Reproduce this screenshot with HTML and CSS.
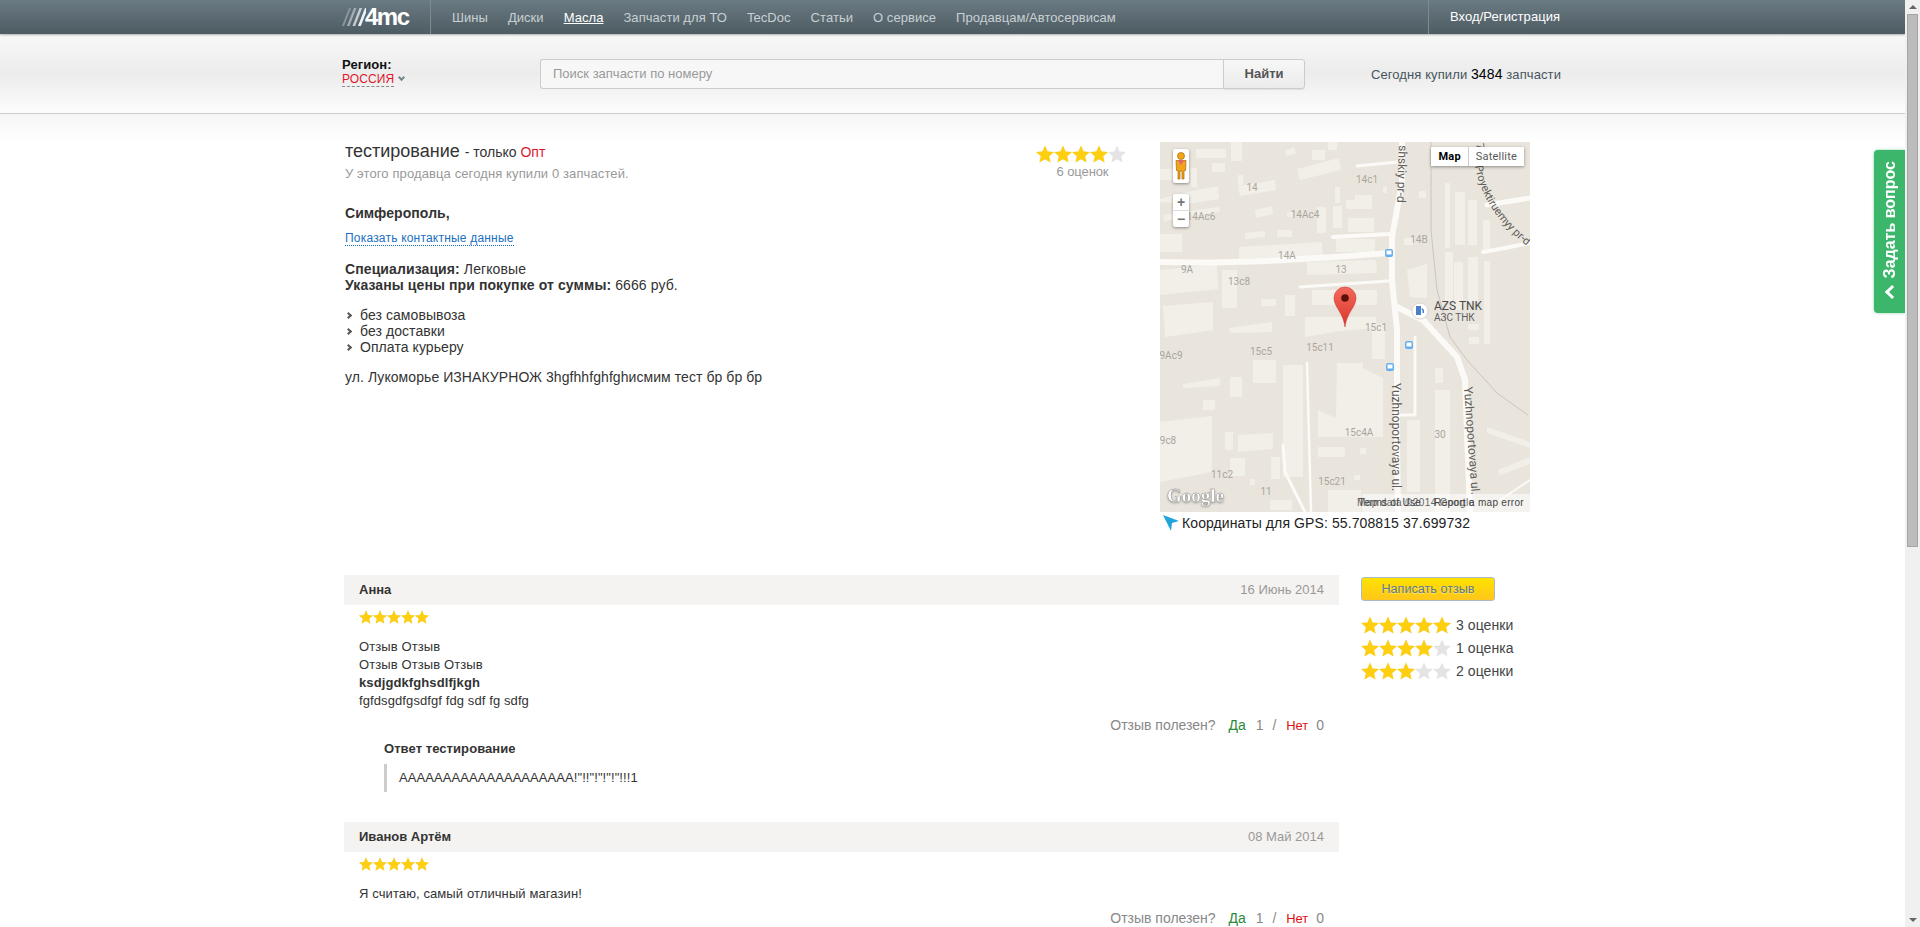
FILE: index.html
```html
<!DOCTYPE html>
<html lang="ru">
<head>
    <meta charset="UTF-8">
    <title>тестирование - 4mc</title>
    <link rel="stylesheet" href="styles.css">
</head>
<body>
    <div class="page">
        <!-- Top navigation -->
        <div class="topbar">
            <div class="wrap topbar-inner">
                <a class="logo" href="#">
                    <svg class="logo-slashes" width="24" height="18" viewBox="0 0 24 18">
                        <path d="M0 18 7 0h2L2 18z" fill="#8b979c"/>
                        <path d="M5 18 12 0h2.4L7.4 18z" fill="#a5afb3"/>
                        <path d="M10.5 18 17.5 0h2.6l-7 18z" fill="#c6cdd0"/>
                        <path d="M16 18 23 0h2.8l-7 18z" fill="#f0f2f3"/>
                    </svg>
                    <span class="logo-text">4mc</span>
                </a>
                <nav class="nav">
                    <a href="#">Шины</a>
                    <a href="#">Диски</a>
                    <a href="#" class="active">Масла</a>
                    <a href="#">Запчасти для ТО</a>
                    <a href="#">TecDoc</a>
                    <a href="#">Статьи</a>
                    <a href="#">О сервисе</a>
                    <a href="#">Продавцам/Автосервисам</a>
                </nav>
                <a class="login" href="#">Вход/Регистрация</a>
            </div>
        </div>

        <!-- Region and search -->
        <div class="searchbar">
            <div class="wrap searchbar-inner">
                <div class="region">
                    <b>Регион:</b>
                    <div><span class="region-name">РОССИЯ</span><span class="region-arrow"></span></div>
                </div>
                <form class="search">
                    <input type="text" placeholder="Поиск запчасти по номеру" aria-label="Поиск">
                    <button type="button">Найти</button>
                </form>
                <div class="counter">Сегодня купили <span>3484</span> запчасти</div>
            </div>
        </div>

        <div class="main">
            <div class="wrap content">
                <!-- Seller -->
                <div class="seller">
                    <div class="seller-info">
                        <h1>тестирование <small>- только <em>Опт</em></small></h1>
                        <p class="sold-today">У этого продавца сегодня купили 0 запчастей.</p>
                        <p class="city">Симферополь,</p>
                        <p class="contacts"><a href="#">Показать контактные данные</a></p>
                        <p class="specs"><b>Специализация:</b> Легковые<br><b>Указаны цены при покупке от суммы:</b> 6666 руб.</p>
                        <ul class="terms">
                            <li>без самовывоза</li>
                            <li>без доставки</li>
                            <li>Оплата курьеру</li>
                        </ul>
                        <p class="address">ул. Лукоморье ИЗНАКУРНОЖ 3hgfhhfghfghисмим тест бр бр бр</p>
                    </div>
                    <div class="seller-rating">
                        <div class="stars"><i style="width: 80%"></i></div>
                        <div class="votes">6 оценок</div>
                    </div>
                    <div class="map-col">
                        <div class="map">
                            <svg class="map-canvas" width="370" height="370" viewBox="0 0 370 370">
                                <defs>
                                    <linearGradient id="pin" x1="0" y1="0" x2="0" y2="1">
                                        <stop offset="0" stop-color="#f4695c"/>
                                        <stop offset="1" stop-color="#d9352a"/>
                                    </linearGradient>
                                    <path id="proyekt" d="M315 24C320 50 333 78 372 108"/>
                                </defs>
                                <rect width="370" height="370" fill="#e9e5dd"/>

                                <!-- buildings -->
                                <g fill="#f2efe9">
                                    <rect x="36" y="7" width="30" height="9"/>
                                    <rect x="71" y="0" width="11" height="19"/>
                                    <rect x="52" y="21" width="13" height="9"/>
                                    <rect x="31" y="26" width="6" height="19"/>
                                    <rect x="0" y="27" width="27" height="11"/>
                                    <rect x="152" y="8" width="13" height="10"/>
                                    <rect x="168" y="0" width="9" height="8"/>
                                    <polygon points="125,9 134,5 136,11 127,14"/>
                                    <polygon points="137,27 179,16 181,28 140,38"/>
                                    <rect x="78" y="33" width="5" height="10"/>
                                    <polygon points="78,44 115,38 116,48 80,54"/>
                                    <polygon points="27,50 58,44 59,57 27,62 0,60 0,57"/>
                                    <polygon points="95,68 112,64 113,72 96,76"/>
                                    <polygon points="3,73 59,65 60,70 4,79"/>
                                    <rect x="127" y="70" width="6" height="5"/>
                                    <rect x="157" y="65" width="9" height="26"/>
                                    <rect x="173" y="64" width="9" height="22"/>
                                    <polygon points="186,58 195,58 195,53 212,53 212,67 186,67"/>
                                    <rect x="188" y="76" width="26" height="14"/>
                                    <rect x="175" y="45" width="5" height="16"/>
                                    <rect x="223" y="45" width="4" height="6"/>
                                    <rect x="259" y="49" width="7" height="7"/>
                                    <polygon points="85,91 105,89 105,95 85,97"/>
                                    <rect x="117" y="88" width="15" height="7"/>
                                    <rect x="0" y="92" width="22" height="18"/>
                                    <polygon points="79,105 162,100 163,116 79,117"/>
                                    <rect x="176" y="97" width="39" height="13"/>
                                    <rect x="244" y="96" width="9" height="7"/>
                                    <polygon points="147,120 216,118 217,131 147,133"/>
                                    <polygon points="247,128 267,122 267,156 250,155"/>
                                    <polygon points="0,128 57,122 58,147 0,153"/>
                                    <rect x="62" y="128" width="15" height="38"/>
                                    <rect x="152" y="148" width="65" height="15"/>
                                    <rect x="101" y="157" width="15" height="7"/>
                                    <rect x="125" y="153" width="10" height="21"/>
                                    <polygon points="3,164 53,160 53,188 5,195"/>
                                    <polygon points="145,175 216,175 216,186 180,189 145,195"/>
                                    <rect x="212" y="182" width="13" height="35"/>
                                    <polygon points="69,186 112,180 112,190 70,191"/>
                                    <rect x="93" y="218" width="23" height="23"/>
                                    <polygon points="23,242 60,236 60,244 23,246"/>
                                    <rect x="70" y="235" width="12" height="20"/>
                                    <rect x="43" y="258" width="12" height="10"/>
                                    <polygon points="0,280 52,274 52,330 0,340"/>
                                    <rect x="65" y="290" width="8" height="18"/>
                                    <polygon points="78,293 113,291 113,307 78,310"/>
                                    <rect x="70" y="316" width="15" height="18"/>
                                    <rect x="123" y="223" width="20" height="112"/>
                                    <polygon points="177,221 203,221 203,226 223,236 223,295 158,295 158,268 176,276"/>
                                    <rect x="158" y="305" width="27" height="10"/>
                                    <rect x="200" y="306" width="6" height="6"/>
                                    <rect x="111" y="315" width="9" height="22"/>
                                    <rect x="90" y="337" width="5" height="6"/>
                                    <rect x="110" y="358" width="22" height="10"/>
                                    <rect x="194" y="333" width="6" height="5"/>
                                    <rect x="168" y="348" width="33" height="22"/>
                                    <rect x="247" y="278" width="13" height="72"/>
                                    <rect x="275" y="226" width="8" height="15"/>
                                    <rect x="275" y="248" width="15" height="122"/>
                                    <rect x="285" y="41" width="5" height="65"/>
                                    <rect x="295" y="50" width="10" height="53"/>
                                    <rect x="308" y="58" width="9" height="45"/>
                                    <rect x="323" y="78" width="7" height="32"/>
                                    <rect x="285" y="110" width="8" height="49"/>
                                    <rect x="294" y="120" width="9" height="48"/>
                                    <rect x="308" y="115" width="10" height="45"/>
                                    <rect x="324" y="119" width="6" height="83"/>
                                    <rect x="308" y="182" width="11" height="6"/>
                                    <rect x="309" y="195" width="10" height="7"/>
                                    <polygon points="327,285 370,300 370,306 327,291"/>
                                    <polygon points="338,328 370,315 370,322 340,333"/>
                                </g>

                                <!-- rail line -->
                                <path d="M271 0V88L277 148 290 195 307 218 337 251 368 273" fill="none" stroke="#c8c5bf"/>

                                <!-- roads -->
                                <g fill="none" stroke="#fbfaf7" stroke-linecap="round" stroke-linejoin="round">
                                    <path d="M0 120C80 122 150 117 229 111" stroke-width="6"/>
                                    <path d="M242 0V40L232 95V138L237 188V300L238 370" stroke-width="6"/>
                                    <path d="M237 165 263 178 297 215 305 238 310 370" stroke-width="6"/>
                                    <path d="M197 24 237 20" stroke-width="3"/>
                                    <path d="M173 95 230 92" stroke-width="4"/>
                                    <path d="M140 145 228 139" stroke-width="3"/>
                                    <path d="M323 110 345 106 370 101" stroke-width="4"/>
                                    <path d="M327 63 370 56" stroke-width="5"/>
                                    <path d="M255 195V273H240" stroke-width="3"/>
                                    <path d="M147 221 151 370" stroke-width="2.5"/>
                                    <path d="M123 303 125 330 140 360 145 370" stroke-width="3"/>
                                    <path d="M340 358 370 338" stroke-width="2"/>
                                </g>

                                <!-- labels -->
                                <g class="map-label" text-anchor="middle">
                                    <text x="207" y="41">14c1</text>
                                    <text x="92" y="49">14</text>
                                    <text x="41" y="78">14Ac6</text>
                                    <text x="145" y="76">14Ac4</text>
                                    <text x="259" y="101">14B</text>
                                    <text x="127" y="117">14A</text>
                                    <text x="27" y="131">9A</text>
                                    <text x="181" y="131">13</text>
                                    <text x="79" y="143">13c8</text>
                                    <text x="216" y="189">15c1</text>
                                    <text x="101" y="213">15c5</text>
                                    <text x="160" y="209">15c11</text>
                                    <text x="11" y="217">9Ac9</text>
                                    <text x="199" y="294">15c4A</text>
                                    <text x="280" y="296">30</text>
                                    <text x="8" y="302">9c8</text>
                                    <text x="62" y="336">11c2</text>
                                    <text x="172" y="343">15c21</text>
                                    <text x="106" y="353">11</text>
                                </g>
                                <g class="map-street">
                                    <text transform="translate(239 3) rotate(92)">shskiy pr-d</text>
                                    <text class="map-street-sm" transform="translate(316 2) rotate(80)">7</text>
                                    <text class="map-street-sm"><textPath href="#proyekt">Proyektiruemyy pr-d</textPath></text>
                                    <text transform="translate(232 241) rotate(90)">Yuzhnoportovaya ul.</text>
                                    <text transform="translate(304 245) rotate(86)">Yuzhnoportovaya ul.</text>
                                </g>

                                <!-- transit stops -->
                                <g>
                                    <rect x="225" y="107" width="8" height="8" rx="2" fill="#63aef0"/>
                                    <rect x="226.500" y="108.500" width="5" height="4" fill="#fff"/>
                                    <rect x="245" y="199" width="8" height="8" rx="2" fill="#63aef0"/>
                                    <rect x="246.500" y="200.500" width="5" height="4" fill="#fff"/>
                                    <rect x="226" y="221" width="8" height="8" rx="2" fill="#63aef0"/>
                                    <rect x="227.500" y="222.500" width="5" height="4" fill="#fff"/>
                                </g>

                                <!-- petrol station -->
                                <circle cx="260" cy="169" r="8" fill="#fff" stroke="#d9d6cf"/>
                                <path d="M256 164h5v9h-5zM262 166l2 2v3h-1.500v-2.500l-1-1z" fill="#4a7fc9"/>
                                <text class="map-poi" x="274" y="168">AZS TNK</text>
                                <text class="map-poi-sub" x="274" y="179">АЗС ТНК</text>

                                <!-- marker -->
                                <path d="M185 185C183 170 174 165 174 156A11 11 0 0 1 196 156C196 165 187 170 185 185Z" fill="url(#pin)" stroke="#c9352b" stroke-width=".5"/>
                                <circle cx="185" cy="156" r="3.800" fill="#5c1009"/>

                                <text class="map-google" x="7" y="360">Google</text>
                            </svg>

                            <!-- map controls -->
                            <div class="pegman">
                                <svg width="12" height="28" viewBox="0 0 12 28">
                                    <circle cx="6" cy="4" r="3.500" fill="#f2a516" stroke="#a86a0a" stroke-width=".7"/>
                                    <path d="M1 8.500h10l-.5 10H9V27H7V19H5v8H3v-8.500H1.500z" fill="#f2a516" stroke="#a86a0a" stroke-width=".7"/>
                                    <path d="M3 8.500h6L6 13z" fill="#e8607a"/>
                                </svg>
                            </div>
                            <div class="zoomctl">
                                <span>+</span>
                                <span>−</span>
                            </div>
                            <div class="maptype">
                                <span class="on">Map</span>
                                <span>Satellite</span>
                            </div>
                            <div class="attribution">
                                <span class="map-data">Map data ©2014 Google</span>
                                <span>Terms of Use</span>
                                <span>Report a map error</span>
                            </div>
                        </div>
                        <div class="gps">
                            <svg width="16" height="16" viewBox="0 0 16 16"><path d="M0 0 16 6 9 8 8 16z" fill="#1fa5dc"/></svg>
                            <span>Координаты для GPS: 55.708815 37.699732</span>
                        </div>
                    </div>
                </div>

                <!-- Reviews -->
                <div class="reviews-row">
                    <div class="reviews">
                        <div class="review">
                            <div class="review-head"><b>Анна</b><span>16 Июнь 2014</span></div>
                            <div class="stars small"><i style="width: 100%"></i></div>
                            <div class="review-text">
                                Отзыв Отзыв<br>
                                Отзыв Отзыв Отзыв<br>
                                <b>ksdjgdkfghsdlfjkgh</b><br>
                                fgfdsgdfgsdfgf fdg sdf fg sdfg
                            </div>
                            <div class="useful">Отзыв полезен? <a class="yes" href="#">Да</a> <span class="num">1</span> <span class="sep">/</span> <a class="no" href="#">Нет</a> <span class="num last">0</span></div>
                            <div class="reply">
                                <b>Ответ тестирование</b>
                                <blockquote>AAAAAAAAAAAAAAAAAAAA!"!!"!"!"!"!!!1</blockquote>
                            </div>
                        </div>
                        <div class="review">
                            <div class="review-head"><b>Иванов Артём</b><span>08 Май 2014</span></div>
                            <div class="stars small"><i style="width: 100%"></i></div>
                            <div class="review-text">Я считаю, самый отличный магазин!</div>
                            <div class="useful">Отзыв полезен? <a class="yes" href="#">Да</a> <span class="num">1</span> <span class="sep">/</span> <a class="no" href="#">Нет</a> <span class="num last">0</span></div>
                        </div>
                    </div>
                    <div class="review-side">
                        <a class="write-btn" href="#">Написать отзыв</a>
                        <div class="rate-row"><div class="stars"><i style="width: 100%"></i></div><span>3 оценки</span></div>
                        <div class="rate-row"><div class="stars"><i style="width: 80%"></i></div><span>1 оценка</span></div>
                        <div class="rate-row"><div class="stars"><i style="width: 60%"></i></div><span>2 оценки</span></div>
                    </div>
                </div>
            </div>
        </div>

        <a class="ask-tab" href="#"><span class="ask-chevron"></span><span class="ask-text">Задать вопрос</span></a>
    </div>

    <!-- Scrollbar as it looks in the screenshot -->
    <div class="scrollbar">
        <div class="arrow-up"></div>
        <div class="thumb"></div>
        <div class="arrow-down"></div>
    </div>
</body>
</html>
```

FILE: styles.css
```css
html, body {
    height: 927px;
    margin: 0;
    overflow: hidden;
}

body {
    display: flex;
    font-family: "Liberation Sans", Arial, sans-serif;
    font-size: 14px;
    letter-spacing: 0.07px;
    color: #333;
    background-color: #fff;
}

a {
    text-decoration: none;
}

.page {
    flex: 1;
    min-width: 0;
    position: relative;
    overflow: hidden;
}

.wrap {
    width: 1221px;
    margin: 0 auto;
}

/* Top navigation */
.topbar {
    height: 34px;
    background: linear-gradient(#6b7b83, #4d5b62);
    box-shadow: 0 1px 2px rgba(0, 0, 0, 0.3);
    position: relative;
}

.topbar-inner {
    display: flex;
    height: 34px;
}

.logo {
    display: flex;
    align-items: center;
    width: 88px;
    border-right: 1px solid #7d8b91;
    color: #fff;
}

.logo-slashes {
    flex: none;
}

.logo-text {
    font-size: 24px;
    font-weight: bold;
    letter-spacing: -1.500px;
    margin-left: -1px;
}

.nav {
    display: flex;
    align-items: center;
    gap: 20px;
    margin-left: 21px;
    flex: 1;
}

.nav a {
    font-size: 13px;
    letter-spacing: 0.05px;
    color: #c9d0d3;
}

.nav a.active {
    color: #fff;
    text-decoration: underline;
}

.login {
    width: 112px;
    padding-left: 21px;
    border-left: 1px solid #7d8b91;
    font-size: 13px;
    line-height: 34px;
    color: #fff;
    margin-right: 1px;
}

/* Region and search */
.searchbar {
    height: 79px;
    background: linear-gradient(#f8f8f8, #ececec 50%, #fdfdfd);
    border-bottom: 1px solid #ccc;
}

.searchbar-inner {
    display: flex;
    align-items: center;
    height: 79px;
}

.region {
    width: 198px;
    margin-bottom: 4px;
    font-size: 13px;
    line-height: 14px;
    color: #111;
}

.region-name {
    font-size: 12px;
    color: #e0182d;
    border-bottom: 1px dashed #888;
}

.region-arrow {
    display: inline-block;
    width: 3px;
    height: 3px;
    margin: 0 0 3px 5px;
    border-right: 2px solid #78858c;
    border-bottom: 2px solid #78858c;
    transform: rotate(45deg);
}

.search {
    display: flex;
    width: 765px;
    height: 30px;
    margin: 0;
}

.search input {
    flex: 1;
    box-sizing: border-box;
    height: 30px;
    padding: 0 12px;
    font-family: inherit;
    font-size: 13px;
    background-color: #f7f7f7;
    border: 1px solid #ccc;
    border-right: none;
    border-radius: 3px 0 0 3px;
}

.search input::placeholder {
    color: #999;
    opacity: 1;
}

.search button {
    width: 82px;
    height: 30px;
    font-family: inherit;
    font-size: 13px;
    font-weight: bold;
    color: #555;
    background: linear-gradient(#f7f7f7, #ebebeb);
    border: 1px solid #ccc;
    border-radius: 0 3px 3px 0;
    box-shadow: 0 1px 1px rgba(0, 0, 0, 0.08);
}

.counter {
    flex: 1;
    text-align: right;
    padding-right: 2px;
    font-size: 13px;
    letter-spacing: 0.1px;
    color: #46565e;
}

.counter span {
    font-size: 14px;
    color: #000;
}

/* Seller */
.main {
    background: linear-gradient(#f6f6f6, #fff) 0 0 / 100% 28px no-repeat;
}

.content {
    padding-top: 28px;
}

.seller {
    display: flex;
    padding-left: 3px;
}

.seller-info {
    width: 691px;
    margin-top: -1px;
}

.seller-info h1 {
    margin: 0;
    font-size: 18px;
    font-weight: normal;
    letter-spacing: 0;
    line-height: 20px;
    color: #333;
}

.seller-info h1 small {
    font-size: 14px;
}

.seller-info h1 em {
    font-style: normal;
    color: #e0182d;
}

.seller-info p {
    margin: 0;
    line-height: 16px;
}

.seller-info .sold-today {
    margin-top: 4px;
    font-size: 13px;
    letter-spacing: 0.11px;
    color: #999;
}

.seller-info .city {
    margin-top: 23px;
    font-weight: bold;
}

.seller-info .contacts {
    margin-top: 10px;
    font-size: 12px;
    letter-spacing: 0.2px;
    line-height: 14px;
}

.contacts a {
    color: #1a6fc4;
    border-bottom: 1px dotted #1a6fc4;
}

.seller-info .specs {
    margin-top: 16px;
    letter-spacing: 0.1px;
}

.terms {
    margin: 14px 0 0;
    padding: 0;
    list-style: none;
    line-height: 16px;
}

.terms li {
    padding-left: 15px;
    position: relative;
}

.terms li::before {
    content: "";
    position: absolute;
    left: 1px;
    top: 6px;
    width: 3px;
    height: 3px;
    border-top: 2px solid #555;
    border-right: 2px solid #555;
    transform: rotate(45deg);
}

.seller-info .address {
    margin-top: 14px;
}

/* Rating stars: grey row with a gold row over it */
.stars {
    width: 90px;
    height: 18px;
    background: url("data:image/svg+xml,%3Csvg xmlns='http://www.w3.org/2000/svg' viewBox='0 0 20 19'%3E%3Cpolygon points='10,0 12.9,6.6 20,7.3 14.6,12 16.2,19 10,15.3 3.8,19 5.4,12 0,7.3 7.1,6.6' fill='%23e4e4e4'/%3E%3C/svg%3E") 0 0 / 18px 18px repeat-x;
}

.stars i {
    display: block;
    height: 100%;
    background: url("data:image/svg+xml,%3Csvg xmlns='http://www.w3.org/2000/svg' viewBox='0 0 20 19'%3E%3Cpolygon points='10,0 12.9,6.6 20,7.3 14.6,12 16.2,19 10,15.3 3.8,19 5.4,12 0,7.3 7.1,6.6' fill='%23fdcf0e'/%3E%3C/svg%3E") 0 0 / 18px 18px repeat-x;
}

.stars.small {
    width: 70px;
    height: 14px;
    background-size: 14px 14px;
    margin: 5px 0 0 15px;
}

.stars.small i {
    background-size: 14px 14px;
}

.seller-rating {
    width: 90px;
    margin: 3px 34px 0 0;
}

.votes {
    margin-top: 1px;
    padding-left: 3px;
    font-size: 13px;
    letter-spacing: -0.1px;
    line-height: 16px;
    color: #999;
    text-align: center;
}

/* Map */
.map-col {
    width: 370px;
}

.map {
    position: relative;
    width: 370px;
    height: 370px;
    overflow: hidden;
}

.map-canvas {
    display: block;
    letter-spacing: 0;
}

.map-label {
    font-family: Roboto, sans-serif;
    font-size: 10px;
    fill: #a9a59d;
}

.map-street {
    font-family: Roboto, sans-serif;
    font-size: 12px;
    fill: #5e5c58;
}

.map-street .map-street-sm {
    font-size: 11px;
}

.map-poi {
    font-family: Roboto, sans-serif;
    font-size: 12px;
    fill: #4a4a4a;
}

.map-poi-sub {
    font-family: Roboto, sans-serif;
    font-size: 10px;
    fill: #5e5e5e;
}

.map-google {
    font-family: "Liberation Serif", serif;
    font-size: 19px;
    font-weight: bold;
    fill: #fff;
    stroke: #8f8f8f;
    stroke-width: 0.4px;
    filter: drop-shadow(0 1px 1px rgba(0, 0, 0, 0.3));
}

.pegman,
.zoomctl {
    position: absolute;
    left: 13px;
    width: 16px;
    background-color: #fff;
    border-radius: 2px;
    box-shadow: 0 1px 3px rgba(0, 0, 0, 0.4);
}

.pegman {
    top: 7px;
    height: 34px;
    display: flex;
    align-items: center;
    justify-content: center;
}

.zoomctl {
    top: 52px;
    height: 33px;
    display: flex;
    flex-direction: column;
}

.zoomctl span {
    flex: 1;
    font-size: 14px;
    font-weight: bold;
    line-height: 16px;
    text-align: center;
    color: #777;
}

.zoomctl span + span {
    border-top: 1px solid #ddd;
}

.maptype {
    position: absolute;
    top: 5px;
    right: 6px;
    display: flex;
    height: 19px;
    font-family: Roboto, sans-serif;
    font-size: 11px;
    letter-spacing: 0.2px;
    line-height: 19px;
    background-color: #fff;
    color: #565656;
    box-shadow: 0 1px 3px rgba(0, 0, 0, 0.4);
}

.maptype span {
    padding: 0 7px;
}

.maptype span + span {
    border-left: 1px solid #ccc;
}

.maptype .on {
    font-weight: bold;
    color: #000;
}

.attribution {
    position: absolute;
    right: 0;
    bottom: 0;
    display: flex;
    gap: 13px;
    height: 18px;
    width: 168px;
    padding-right: 6px;
    justify-content: flex-end;
    box-sizing: border-box;
    font-size: 10px;
    letter-spacing: 0.3px;
    line-height: 18px;
    white-space: nowrap;
    color: #444;
    background-color: rgba(255, 255, 255, 0.55);
}

/* Terms and Report lie over the map data line, as on the real map */
.attribution span {
    position: relative;
}

.attribution .map-data {
    position: absolute;
    left: -5px;
    letter-spacing: 0.4px;
    color: #666;
}

.gps {
    display: flex;
    align-items: center;
    gap: 3px;
    height: 18px;
    margin: 2px 0 1px 3px;
    letter-spacing: 0.1px;
    color: #222;
}

/* Reviews */
.reviews-row {
    display: flex;
    margin-top: 42px;
    padding-left: 2px;
}

.reviews {
    width: 995px;
}

.review {
    margin-bottom: 30px;
}

.review-head {
    display: flex;
    justify-content: space-between;
    align-items: center;
    box-sizing: border-box;
    height: 30px;
    padding: 0 15px 2px;
    font-size: 13px;
    letter-spacing: 0;
    background-color: #f5f3f1;
}

.review-head span {
    color: #999;
}

.review-text {
    margin: 14px 0 0 15px;
    font-size: 13px;
    letter-spacing: 0.1px;
    line-height: 18px;
}

.useful {
    margin-top: 6px;
    padding-right: 15px;
    text-align: right;
    font-size: 14px;
    letter-spacing: 0;
    line-height: 18px;
    color: #888;
}

.useful .yes {
    margin-left: 9px;
    color: #2a8a3e;
}

.useful .num {
    margin-left: 6px;
}

.useful .num.last {
    margin-left: 4px;
}

.useful .sep {
    margin-left: 5px;
}

.useful .no {
    margin-left: 6px;
    font-size: 13px;
    color: #e0100f;
}

.reply {
    margin: 6px 0 0 40px;
    font-size: 13px;
    line-height: 16px;
}

.reply blockquote {
    margin: 7px 0 0;
    padding: 0 0 1px 12px;
    border-left: 3px solid #ccc;
    line-height: 27px;
}

.review-side {
    margin-left: 22px;
    padding-top: 2px;
}

.write-btn {
    display: block;
    box-sizing: border-box;
    width: 134px;
    height: 24px;
    margin-bottom: 12px;
    font-size: 12.500px;
    line-height: 22px;
    text-align: center;
    color: #5a7a90;
    text-shadow: 0 1px 0 rgba(255, 255, 255, 0.4);
    background: linear-gradient(#ffe200, #ffc61c);
    border: 1px solid #a9bac4;
    border-radius: 3px;
}

.rate-row {
    display: flex;
    align-items: center;
    gap: 5px;
    height: 23px;
    color: #444;
}

/* Side tab */
.ask-tab {
    position: absolute;
    top: 150px;
    right: 0;
    display: flex;
    flex-direction: column-reverse;
    align-items: center;
    gap: 9px;
    box-sizing: border-box;
    width: 31px;
    height: 163px;
    padding: 10px 0 16px;
    background-color: #3bb66b;
    border-radius: 4px 0 0 4px;
    box-shadow: 0 0 3px rgba(59, 182, 107, 0.6);
}

.ask-text {
    writing-mode: vertical-rl;
    transform: rotate(180deg);
    font-size: 16px;
    font-weight: bold;
    letter-spacing: 0;
    line-height: 16px;
    white-space: nowrap;
    color: #fff;
}

.ask-chevron {
    width: 7px;
    height: 7px;
    margin-left: 4px;
    border-left: 3px solid #fff;
    border-top: 3px solid #fff;
    transform: rotate(-45deg);
}

/* Scrollbar */
.scrollbar {
    flex: none;
    width: 15px;
    height: 927px;
    background-color: #f0f0f0;
    display: flex;
    flex-direction: column;
    align-items: center;
}

.arrow-up,
.arrow-down {
    width: 0;
    height: 0;
    border-left: 4px solid transparent;
    border-right: 4px solid transparent;
}

.arrow-up {
    margin-top: 5px;
    border-bottom: 4px solid #666;
}

.thumb {
    box-sizing: border-box;
    width: 11px;
    height: 533px;
    margin-top: 5px;
    background-color: #bcbcbc;
    border: 1px solid #a6a6a6;
}

.arrow-down {
    margin-top: auto;
    margin-bottom: 5px;
    border-top: 4px solid #666;
}
```
